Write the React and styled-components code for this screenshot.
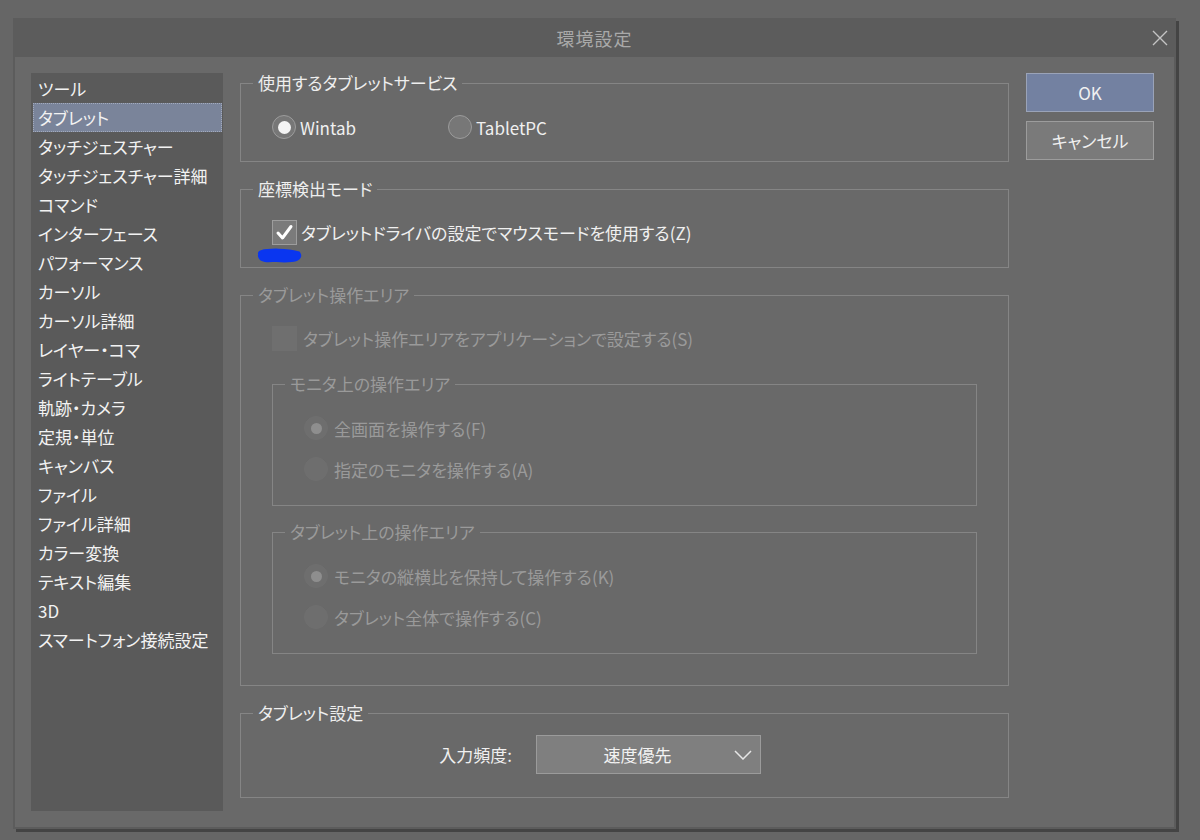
import React from "react";
import styled, { createGlobalStyle } from "styled-components";

const GlobalStyle = createGlobalStyle`
  body {
    margin: 0;
    background-color: #666666;
    font-family: "Noto Sans CJK JP", "Noto Sans", sans-serif;
    font-feature-settings: "palt";
    color: #eeeeee;
  }
`;

const Screen = styled.div`
  width: 1200px;
  height: 840px;
  padding: 18px 0 0 13px;
  box-sizing: border-box;
  overflow: hidden;
`;

const Dialog = styled.div`
  width: 1163px;
  height: 811px;
  background-color: #5c5c5c;
  box-shadow: 3px 3px 0 #444444;
  display: flex;
  flex-direction: column;
`;

const TitleBar = styled.div`
  height: 39px;
  display: grid;
  grid-template-columns: 1fr auto 1fr;
  align-items: center;
`;

const Title = styled.div`
  grid-column: 2;
  font-size: 18px;
  color: #a9a9a9;
  letter-spacing: 1px;
`;

const CloseButton = styled.div`
  justify-self: end;
  margin-right: 8px;
  width: 16px;
  height: 16px;
  display: flex;
`;

const Body = styled.div`
  flex: 1;
  margin: 0 2px 2px;
  background-color: #696969;
  padding: 16px 20px 16px 16px;
  display: flex;
  gap: 17px;
`;

const CategoryList = styled.ul`
  list-style: none;
  margin: 0;
  padding: 1px 0 0;
  width: 192px;
  background-color: #5a5a5a;
  flex-shrink: 0;
`;

const CategoryItem = styled.li`
  height: 29px;
  line-height: 27px;
  margin: 0 1px 0 2px;
  padding-left: 4px;
  font-size: 17px;
  color: #f2f2f2;
  border: 1px ${(p) => (p.$active ? "dotted #a3abbd" : "solid transparent")};
  background-color: ${(p) => (p.$active ? "#7a849a" : "transparent")};
  box-sizing: border-box;
  white-space: nowrap;
`;

const Settings = styled.div`
  width: 769px;
  display: flex;
  flex-direction: column;
  gap: 17px;
`;

const Group = styled.fieldset`
  margin: 0;
  padding: 0;
  min-width: 0;
  border: 1px solid #858585;
  position: relative;
`;

const GroupTitle = styled.legend`
  margin-left: 12px;
  padding: 0 5px;
  font-size: 17px;
  line-height: 20px;
  color: ${(p) => (p.$disabled ? "#9a9a9a" : "#eeeeee")};
`;

const GroupContent = styled.div`
  padding: ${(p) => p.$pad || "19px 31px"};
  display: flex;
  flex-direction: column;
  gap: ${(p) => p.$gap || "11px"};
`;

const OptionRow = styled.div`
  display: flex;
  align-items: center;
  height: 30px;
`;

const Option = styled.label`
  display: flex;
  align-items: center;
  gap: ${(p) => (p.$disabled ? "6px" : "4px")};
  width: ${(p) => p.$width || "auto"};
  font-size: 17px;
  color: ${(p) => (p.$disabled ? "#9a9a9a" : "#f0f0f0")};
  white-space: nowrap;
`;

const RadioCircle = styled.span`
  width: 24px;
  height: 24px;
  border-radius: 50%;
  box-sizing: border-box;
  display: flex;
  align-items: center;
  justify-content: center;
  flex-shrink: 0;
  background-color: ${(p) => (p.$disabled ? "#6e6e6e" : "#777777")};
  border: 1px solid ${(p) => (p.$disabled ? "#6f6f6f" : "#9c9c9c")};

  &::after {
    content: "";
    display: ${(p) => (p.$checked ? "block" : "none")};
    width: ${(p) => (p.$disabled ? "11px" : "13px")};
    height: ${(p) => (p.$disabled ? "11px" : "13px")};
    border-radius: 50%;
    background-color: ${(p) => (p.$disabled ? "#8e8e8e" : "#f4f4f4")};
  }
`;

const CheckBox = styled.span`
  width: 25px;
  height: 25px;
  box-sizing: border-box;
  display: flex;
  align-items: center;
  justify-content: center;
  flex-shrink: 0;
  background-color: ${(p) => (p.$disabled ? "#6f6f6f" : "#7b7b7b")};
  border: 1px solid ${(p) => (p.$disabled ? "#6f6f6f" : "#9d9d9d")};
`;

const Scribble = styled.svg`
  position: absolute;
  left: 16px;
  top: 49px;
`;

const FieldRow = styled.div`
  display: grid;
  grid-template-columns: 271px 225px;
  column-gap: 24px;
  align-items: center;
  padding: 12px 0 23px;
`;

const FieldLabel = styled.div`
  text-align: right;
  font-size: 17px;
  color: #f0f0f0;
`;

const Select = styled.div`
  height: 39px;
  box-sizing: border-box;
  background-color: #7f7f7f;
  border: 1px solid #9b9b9b;
  display: flex;
  align-items: center;
  font-size: 17px;
  color: #f2f2f2;
`;

const SelectValue = styled.span`
  flex: 1;
  text-align: center;
  padding-left: 12px;
`;

const SelectArrow = styled.span`
  width: 34px;
  display: flex;
  justify-content: center;
`;

const Buttons = styled.div`
  width: 128px;
  display: flex;
  flex-direction: column;
  gap: 9px;
`;

const Button = styled.div`
  height: 39px;
  box-sizing: border-box;
  display: flex;
  align-items: center;
  justify-content: center;
  font-size: 17px;
  color: #f0f0f0;
  background-color: ${(p) => (p.$primary ? "#7381a1" : "#7a7a7a")};
  border: 1px solid ${(p) => (p.$primary ? "#9aa3b8" : "#9c9c9c")};
`;

function Radio({ checked, disabled, width, children }) {
  return (
    <Option $disabled={disabled} $width={width}>
      <RadioCircle $checked={checked} $disabled={disabled} />
      {children}
    </Option>
  );
}

function Check({ checked, disabled, children }) {
  return (
    <Option $disabled={disabled}>
      <CheckBox $disabled={disabled}>
        {checked && (
          <svg width="19" height="19" viewBox="0 0 19 19">
            <path
              d="M3 10 L7.5 15 L16 3.5"
              fill="none"
              stroke="#ffffff"
              strokeWidth="3"
              strokeLinecap="round"
              strokeLinejoin="round"
            />
          </svg>
        )}
      </CheckBox>
      {children}
    </Option>
  );
}

export default function App() {
  const categories = [
    "ツール",
    "タブレット",
    "タッチジェスチャー",
    "タッチジェスチャー詳細",
    "コマンド",
    "インターフェース",
    "パフォーマンス",
    "カーソル",
    "カーソル詳細",
    "レイヤー・コマ",
    "ライトテーブル",
    "軌跡・カメラ",
    "定規・単位",
    "キャンバス",
    "ファイル",
    "ファイル詳細",
    "カラー変換",
    "テキスト編集",
    "3D",
    "スマートフォン接続設定",
  ];

  return (
    <Screen>
      <GlobalStyle />
      <Dialog>
        <TitleBar>
          <Title>環境設定</Title>
          <CloseButton>
            <svg width="16" height="16" viewBox="0 0 16 16">
              <path d="M1 1 L15 15 M15 1 L1 15" stroke="#c4c4c4" strokeWidth="1.4" />
            </svg>
          </CloseButton>
        </TitleBar>
        <Body>
          <CategoryList>
            {categories.map((name, index) => (
              <CategoryItem key={index} $active={index === 1}>
                {name}
              </CategoryItem>
            ))}
          </CategoryList>

          <Settings>
            <Group>
              <GroupTitle>使用するタブレットサービス</GroupTitle>
              <GroupContent>
                <OptionRow>
                  <Radio checked width="176px">Wintab</Radio>
                  <Radio>TabletPC</Radio>
                </OptionRow>
              </GroupContent>
            </Group>

            <Group>
              <GroupTitle>座標検出モード</GroupTitle>
              <GroupContent $pad="18px 31px 20px">
                <OptionRow>
                  <Check checked>タブレットドライバの設定でマウスモードを使用する(Z)</Check>
                </OptionRow>
              </GroupContent>
              <Scribble width="46" height="16" viewBox="0 0 46 16">
                <path
                  d="M5 6 C12 4, 30 4, 40 7 C42 10, 30 11, 20 10 C12 10, 6 11, 5 8"
                  fill="#0a36f0"
                  stroke="#0a36f0"
                  strokeWidth="8"
                  strokeLinecap="round"
                />
              </Scribble>
            </Group>

            <Group>
              <GroupTitle $disabled>タブレット操作エリア</GroupTitle>
              <GroupContent $pad="18px 31px 31px" $gap="0px">
                <OptionRow>
                  <Check disabled>タブレット操作エリアをアプリケーションで設定する(S)</Check>
                </OptionRow>
                <div style={{ height: 21 }} />
                <Group>
                  <GroupTitle $disabled>モニタ上の操作エリア</GroupTitle>
                  <GroupContent $pad="19px 31px 21px">
                    <OptionRow>
                      <Radio checked disabled>全画面を操作する(F)</Radio>
                    </OptionRow>
                    <OptionRow>
                      <Radio disabled>指定のモニタを操作する(A)</Radio>
                    </OptionRow>
                  </GroupContent>
                </Group>
                <div style={{ height: 16 }} />
                <Group>
                  <GroupTitle $disabled>タブレット上の操作エリア</GroupTitle>
                  <GroupContent $pad="19px 31px 21px">
                    <OptionRow>
                      <Radio checked disabled>モニタの縦横比を保持して操作する(K)</Radio>
                    </OptionRow>
                    <OptionRow>
                      <Radio disabled>タブレット全体で操作する(C)</Radio>
                    </OptionRow>
                  </GroupContent>
                </Group>
              </GroupContent>
            </Group>

            <Group>
              <GroupTitle>タブレット設定</GroupTitle>
              <FieldRow>
                <FieldLabel>入力頻度:</FieldLabel>
                <Select>
                  <SelectValue>速度優先</SelectValue>
                  <SelectArrow>
                    <svg width="18" height="10" viewBox="0 0 18 10">
                      <path d="M1 1 L9 9 L17 1" fill="none" stroke="#e6e6e6" strokeWidth="1.5" />
                    </svg>
                  </SelectArrow>
                </Select>
              </FieldRow>
            </Group>
          </Settings>

          <Buttons>
            <Button $primary>OK</Button>
            <Button>キャンセル</Button>
          </Buttons>
        </Body>
      </Dialog>
    </Screen>
  );
}
